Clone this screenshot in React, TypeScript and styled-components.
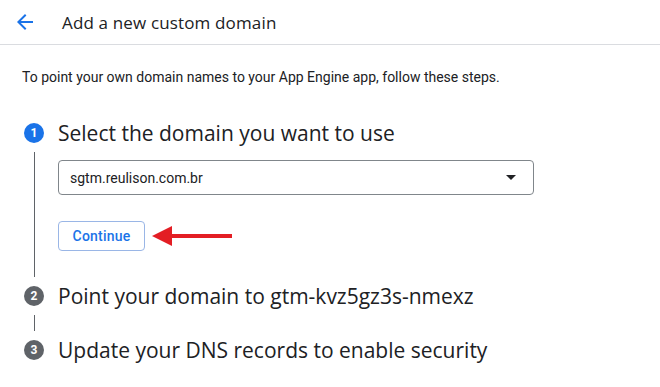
import React, { FC } from 'react';
import styled, { createGlobalStyle } from 'styled-components';

const GlobalStyle = createGlobalStyle`
    html, body {
        margin: 0;
        padding: 0;
        background: #ffffff;
    }
    body {
        font-family: Roboto, "Noto Sans", "Liberation Sans", sans-serif;
        color: #202124;
    }
`;

interface StepProps {
    index: number;
    title: string;
    active?: boolean;
    last?: boolean;
    gap?: number;
    children?: React.ReactNode;
}

const Step: FC<StepProps> = ({ index, title, active, last, gap = 0, children }) => (
    <StepRow>
        <Rail>
            <Badge active={active}>{index}</Badge>
            {!last && <Connector />}
        </Rail>
        <StepContent gap={gap}>
            <StepTitle>{title}</StepTitle>
            {children}
        </StepContent>
    </StepRow>
);

const App: FC = () => (
    <>
        <GlobalStyle />
        <Page>
            <Header>
                <BackButton aria-label="Back">
                    <svg width="24" height="24" viewBox="0 0 24 24">
                        <path fill="#1a73e8" d="M20 11H7.83l5.59-5.59L12 4l-8 8 8 8 1.41-1.41L7.83 13H20v-2z" />
                    </svg>
                </BackButton>
                <HeaderTitle>Add a new custom domain</HeaderTitle>
            </Header>
            <Content>
                <Intro>To point your own domain names to your App Engine app, follow these steps.</Intro>
                <Steps>
                    <Step index={1} title="Select the domain you want to use" active gap={31}>
                        <Select>
                            <SelectValue>sgtm.reulison.com.br</SelectValue>
                            <Caret />
                        </Select>
                        <Actions>
                            <OutlineButton>Continue</OutlineButton>
                            <svg width="82" height="22" viewBox="0 0 82 22">
                                <path d="M0 11 L20 1 L20 21 Z" fill="#e31e24" />
                                <rect x="18" y="9" width="62" height="4" fill="#e31e24" />
                            </svg>
                        </Actions>
                    </Step>
                    <Step index={2} title="Point your domain to gtm-kvz5gz3s-nmexz" gap={26} />
                    <Step index={3} title="Update your DNS records to enable security" last />
                </Steps>
            </Content>
        </Page>
    </>
);

const Page = styled.div`
    width: 660px;
    height: 387px;
    overflow: hidden;
    background: #ffffff;
`;

const Header = styled.header`
    display: flex;
    align-items: center;
    height: 44px;
    border-bottom: 1px solid #dadce0;
    padding: 0 0 0 13px;
`;

const BackButton = styled.button`
    display: flex;
    align-items: center;
    justify-content: center;
    width: 24px;
    height: 24px;
    padding: 0;
    margin: 0 25px 0 0;
    border: none;
    background: none;
`;

const HeaderTitle = styled.h1`
    margin: 0;
    font-family: "Open Sans", Roboto, sans-serif;
    font-size: 17px;
    font-weight: 400;
    color: #202124;
    letter-spacing: 0.15px;
`;

const Content = styled.main`
    padding: 22px 0 0 22px;
`;

const Intro = styled.p`
    margin: 0 0 32px;
    font-size: 14px;
    line-height: 20px;
    color: #202124;
`;

const Steps = styled.div`
    display: flex;
    flex-direction: column;
`;

const StepRow = styled.div`
    display: grid;
    grid-template-columns: 24px 1fr;
    column-gap: 12px;
`;

const Rail = styled.div`
    display: flex;
    flex-direction: column;
    align-items: center;
    padding-top: 4px;
`;

const Badge = styled.div<{ active?: boolean }>`
    flex: none;
    width: 20px;
    height: 20px;
    border-radius: 50%;
    background: ${({ active }) => (active ? '#1a73e8' : '#5f6368')};
    color: #ffffff;
    font-size: 12px;
    font-weight: 700;
    line-height: 20px;
    text-align: center;
`;

const Connector = styled.div`
    flex: 1;
    width: 1px;
    background: #5f6368;
    margin: 9px 0 5px;
`;

const StepContent = styled.div<{ gap: number }>`
    display: flex;
    flex-direction: column;
    align-items: flex-start;
    padding-bottom: ${({ gap }) => gap}px;
`;

const StepTitle = styled.h2`
    margin: 0;
    font-family: "Open Sans", Roboto, sans-serif;
    font-size: 21px;
    font-weight: 400;
    line-height: 28px;
    color: #202124;
`;

const Select = styled.div`
    display: flex;
    align-items: center;
    justify-content: space-between;
    box-sizing: border-box;
    width: 476px;
    height: 35px;
    margin-top: 13px;
    padding: 0 17px 0 11px;
    border: 1px solid #80868b;
    border-radius: 4px;
`;

const SelectValue = styled.span`
    font-size: 14px;
    color: #202124;
`;

const Caret = styled.span`
    width: 0;
    height: 0;
    border-left: 5px solid transparent;
    border-right: 5px solid transparent;
    border-top: 5px solid #202124;
`;

const Actions = styled.div`
    display: flex;
    align-items: center;
    gap: 7px;
    margin-top: 26px;
`;

const OutlineButton = styled.button`
    box-sizing: border-box;
    height: 30px;
    width: 87px;
    padding: 0;
    border: 1px solid #9ab6e6;
    border-radius: 4px;
    background: #ffffff;
    color: #1a73e8;
    font-family: Roboto, sans-serif;
    font-size: 14px;
    font-weight: 500;
    letter-spacing: 0.2px;
`;

export default App;
